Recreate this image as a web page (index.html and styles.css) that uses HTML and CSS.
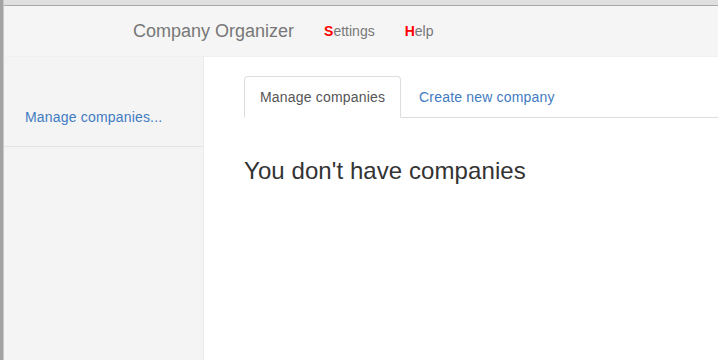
FILE: index.html
```html
<!DOCTYPE html>
<html>
<head>
<meta charset="utf-8">
<link rel="stylesheet" href="styles.css">
</head>
<body>
<div class="frame">
  <div class="frame-left"></div>
  <div class="window">
    <div class="topstrip"></div>
    <header class="navbar">
      <a class="brand">Company Organizer</a>
      <nav class="nav">
        <a class="nav-link"><b class="key">S</b>ettings</a>
        <a class="nav-link"><b class="key">H</b>elp</a>
      </nav>
    </header>
    <div class="body">
      <aside class="sidebar">
        <ul class="side-list">
          <li class="side-item"><a class="side-link">Manage companies...</a></li>
        </ul>
      </aside>
      <main class="main">
        <ul class="tabs">
          <li class="tab active"><a class="tab-link">Manage companies</a></li>
          <li class="tab"><a class="tab-link">Create new company</a></li>
        </ul>
        <h3 class="empty">You don't have companies</h3>
      </main>
    </div>
  </div>
</div>
</body>
</html>
```

FILE: styles.css
```css
html, body {
  margin: 0;
  padding: 0;
  height: 100%;
  background: #fff;
  font-family: "Liberation Sans", Arial, sans-serif;
  font-size: 14px;
  color: #333;
}
.frame {
  display: flex;
  height: 360px;
  overflow: hidden;
}
.frame-left {
  width: 3px;
  background: #a3a3a3;
  border-right: 1px solid #c8c8c8;
  flex: none;
}
.window {
  flex: 1;
  display: flex;
  flex-direction: column;
  min-width: 0;
}
.topstrip {
  height: 5px;
  background: #dfdfdf;
  border-bottom: 1px solid #a9a9a9;
  flex: none;
}
.navbar {
  height: 50px;
  background: #f5f5f5;
  display: flex;
  align-items: center;
  padding-left: 114px;
  flex: none;
  border-bottom: 1px solid #f0f0f0;
}
.brand {
  font-size: 18px;
  line-height: 20px;
  color: #777;
  padding: 15px;
}
.nav {
  display: flex;
}
.nav-link {
  font-size: 14px;
  line-height: 20px;
  padding: 15px;
  color: #777;
}
.key {
  color: #f00;
  font-weight: bold;
}
.body {
  flex: 1;
  display: flex;
  min-height: 0;
}
.sidebar {
  width: 199px;
  flex: none;
  background: #f4f4f4;
  border-right: 1px solid #eaeaea;
}
.side-list {
  list-style: none;
  margin: 0;
  padding: 0;
}
.side-item {
  padding: 50px 0 19px 21px;
  border-bottom: 1px solid #e3e3e3;
}
.side-link {
  color: #3f7bc2;
  line-height: 20px;
  letter-spacing: 0.18px;
}
.main {
  flex: 1;
  padding: 19px 0 0 40px;
  min-width: 0;
}
.tabs {
  list-style: none;
  margin: 0;
  padding: 0;
  display: flex;
  border-bottom: 1px solid #ddd;
}
.tab {
  margin-bottom: -1px;
  margin-right: 2px;
}
.tab-link {
  display: block;
  padding: 10px 15px;
  line-height: 20px;
  color: #3f7bc2;
  letter-spacing: 0.18px;
  border: 1px solid transparent;
  border-radius: 4px 4px 0 0;
}
.tab.active .tab-link {
  color: #555;
  background: #fff;
  border-color: #ddd #ddd transparent #ddd;
}
.empty {
  margin: 40px 0 0 0;
  font-size: 24px;
  font-weight: 500;
  line-height: 1.1;
  color: #333;
  letter-spacing: 0.08px;
}
```
